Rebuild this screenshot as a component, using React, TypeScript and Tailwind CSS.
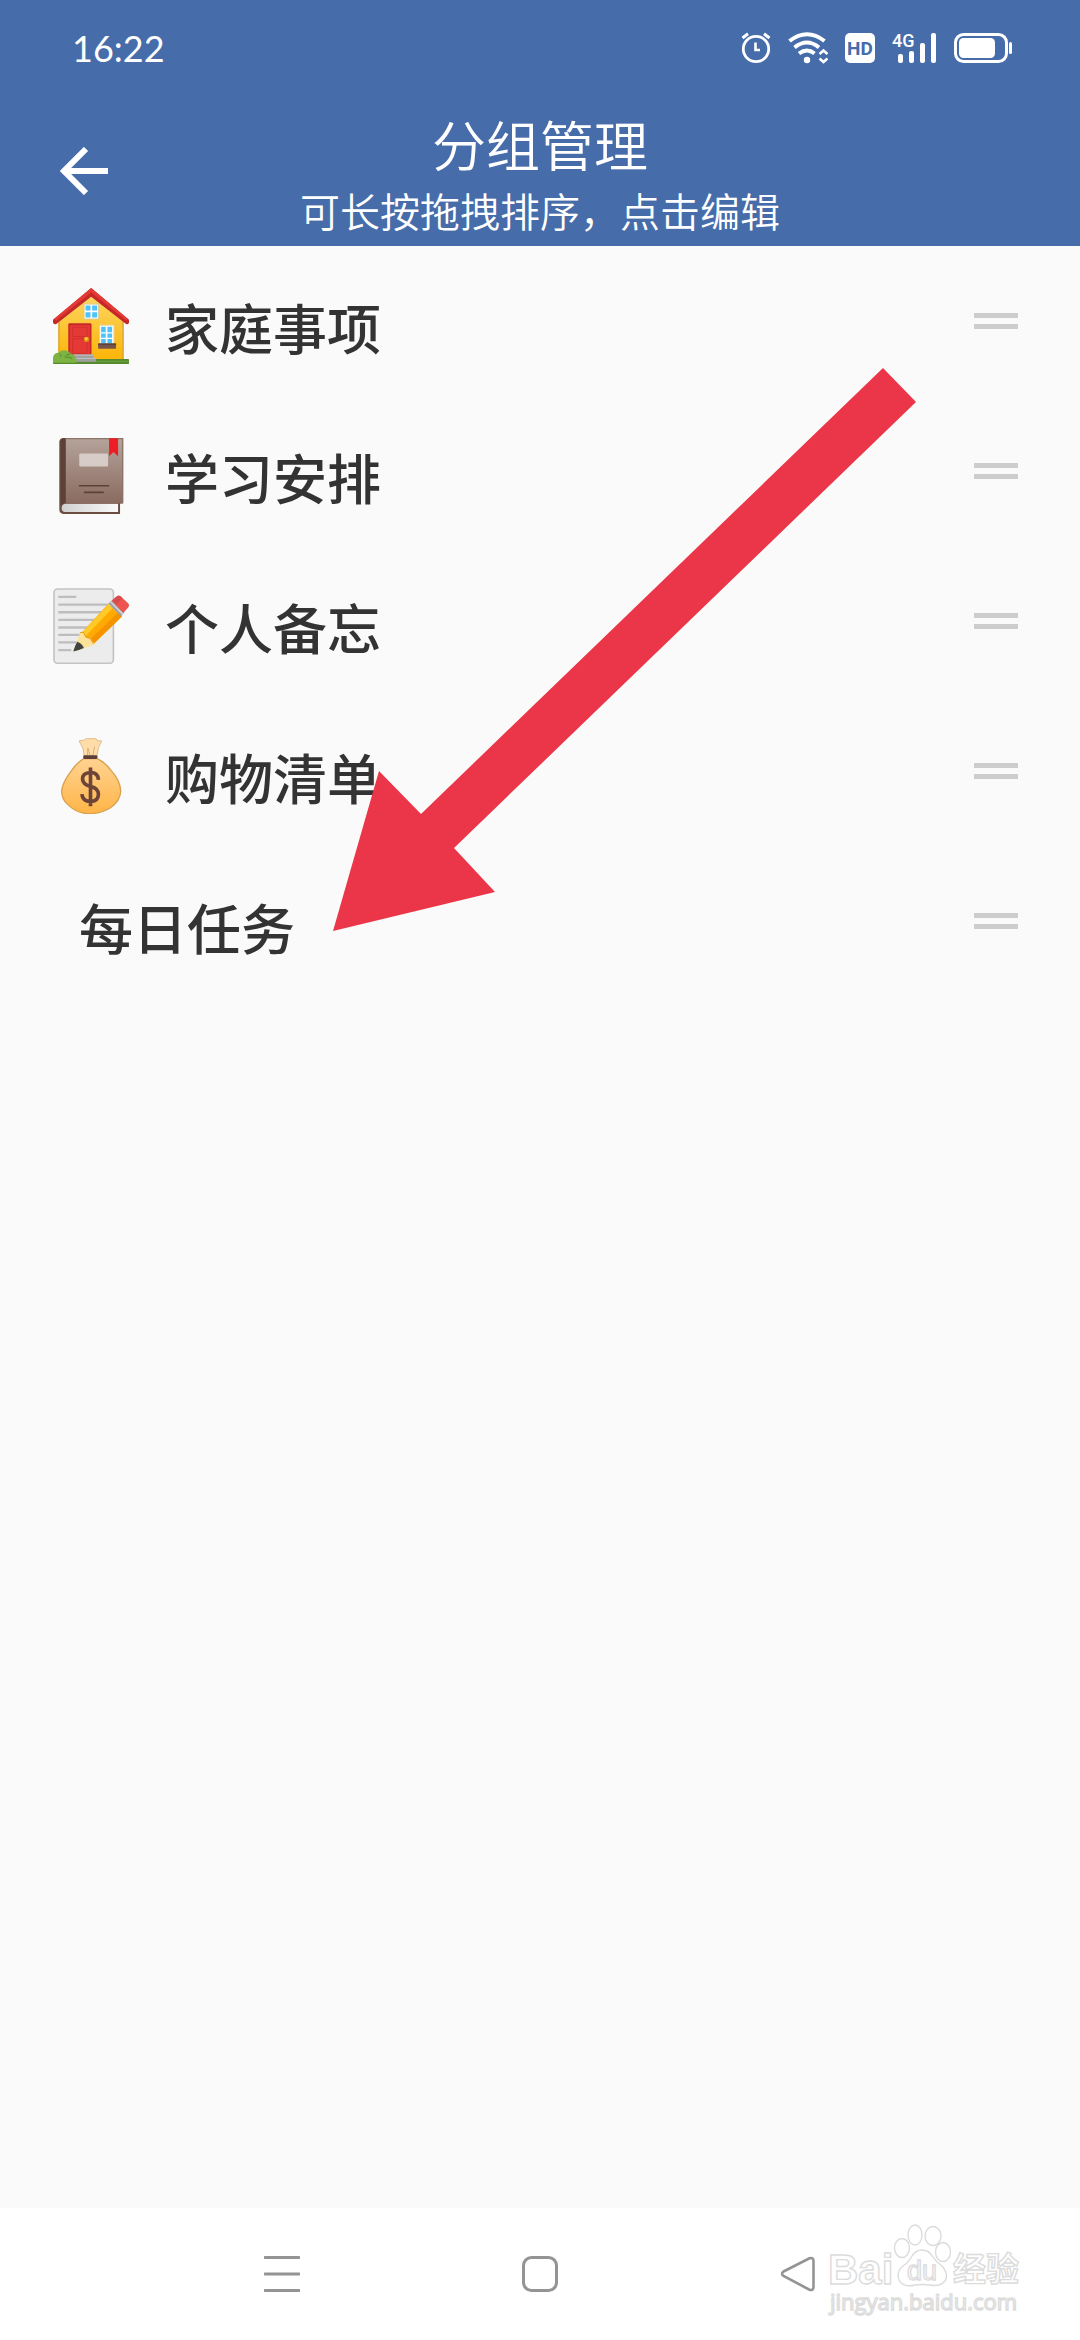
import type { ReactNode } from "react"

function HouseIcon() {
  return (
    <svg viewBox="38 52 229 229" className="size-[76px]" aria-hidden="true">
      <defs>
        <linearGradient id="house-wall" x1="0" y1="0" x2="0" y2="1">
          <stop offset="0" stopColor="#fdd663" />
          <stop offset="1" stopColor="#fcb507" />
        </linearGradient>
      </defs>
      <path d="M153 72L54 150V268H251V150Z" fill="url(#house-wall)" />
      <path d="M56 150V266M249 150V266" stroke="#dba53a" strokeWidth="4" />
      <path d="M153 52L38 148V157Q40 162 47 161L153 78L259 161Q266 162 267 157V148Z" fill="#c62828" />
      <path d="M153 52L42 145L47 151L153 65L259 151L263 145Z" fill="#e53935" />
      <rect x="130" y="99" width="47" height="48" rx="3" fill="#d9c98f" />
      <rect x="133" y="102" width="41" height="42" fill="#fff" />
      <path d="M136 105h15v15h-15zM156 105h15v15h-15zM136 125h15v16h-15zM156 125h15v16h-15z" fill="#4fc3f7" />
      <rect x="177" y="163" width="46" height="58" rx="3" fill="#e5d7a8" />
      <rect x="180" y="166" width="40" height="56" fill="#fff" />
      <path d="M183 169h14v16h-14zM202 169h14v16h-14zM183 189h14v13h-14zM202 189h14v13h-14zM183 206h14v13h-14zM202 206h14v13h-14z" fill="#4fc3f7" />
      <rect x="174" y="219" width="54" height="16" rx="2" fill="#795548" />
      <rect x="174" y="219" width="54" height="5" fill="#5d4037" />
      <rect x="84" y="158" width="70" height="96" rx="4" fill="#c62828" />
      <rect x="89" y="164" width="60" height="90" fill="#e53935" />
      <path d="M97 170h44v28h-44zM97 205h44v44h-44z" fill="none" stroke="#d32f2f" strokeWidth="3" />
      <circle cx="139" cy="207" r="8" fill="#d98b13" />
      <circle cx="138" cy="205" r="5" fill="#ffca28" />
      <rect x="38" y="266" width="229" height="15" rx="2" fill="#558b2f" />
      <path d="M90 273H267" stroke="#689f38" strokeWidth="4" />
      <path d="M100 252h60v10h8v12H98z" fill="#9e9e9e" />
      <path d="M100 252h60v4h-60zM100 262h68v4h-68z" fill="#bdbdbd" />
      <path d="M38 277V262Q40 247 55 247Q64 237 79 241Q88 243 92 250Q108 253 109 274V277Z" fill="#7cb342" />
      <path d="M57 250Q62 254 62 260M90 250Q76 252 74 263M79 262Q85 257 96 265" fill="none" stroke="#558b2f" strokeWidth="3" />
    </svg>
  )
}

function BookIcon() {
  return (
    <svg viewBox="38 52 229 229" className="size-[76px]" aria-hidden="true">
      <defs>
        <linearGradient id="book-cover" x1="0" y1="0" x2="0" y2="1">
          <stop offset="0" stopColor="#b5a39b" />
          <stop offset="1" stopColor="#8a6b60" />
        </linearGradient>
        <linearGradient id="book-pages" x1="0" y1="0" x2="1" y2="0">
          <stop offset="0" stopColor="#d0d0d0" />
          <stop offset="1" stopColor="#fafafa" />
        </linearGradient>
      </defs>
      <path d="M66 52H249V249H240V281H68Q57 279 57 267V62Q58 54 66 52Z" fill="#6d4c41" />
      <path d="M74 250H234V275H72Q64 273 64 262Q65 252 74 250Z" fill="url(#book-pages)" />
      <rect x="76" y="52" width="173" height="197" fill="url(#book-cover)" />
      <path d="M76 54H248V248" fill="none" stroke="#8d7469" strokeWidth="4" />
      <path d="M61 60Q64 54 76 53V248Q64 248 61 256Z" fill="#5d4037" />
      <rect x="117" y="99" width="87" height="39" rx="4" fill="#d7ccc8" />
      <path d="M207 53H234V107L220 94L207 107Z" fill="#ee1c25" />
      <path d="M116 196H207M131 216H191" stroke="#5d4037" strokeWidth="5" />
    </svg>
  )
}

function MemoIcon() {
  return (
    <svg viewBox="38 52 229 229" className="size-[76px]" aria-hidden="true">
      <rect x="41" y="55" width="179" height="224" rx="11" fill="#ececec" stroke="#c4c4c4" strokeWidth="5" />
      <path
        d="M54 79H108M54 102H205M54 125H190M54 148H168M54 171H146M54 193H124M54 216H110M54 239H93"
        stroke="#bdbdbd"
        strokeWidth="7"
      />
      <path d="M101 242L119 193L204 100L246 138L158 223Z" fill="#ffa903" />
      <path d="M120 193L205 101L218 113L134 199Z" fill="#ffca28" />
      <path d="M245 139L233 127L146 211L157 223Z" fill="#f59300" />
      <path d="M100 242L120 186L130 186L137 200L152 204L164 222L112 241Z" fill="#ffe29a" />
      <path d="M119 187L129 185L137 200L150 204L160 220" fill="none" stroke="#e59a12" strokeWidth="3" />
      <path d="M99 243Q104 226 111 214Q125 218 131 233Q117 240 99 243Z" fill="#424242" />
      <path d="M205 99L216 89L253 125L243 138Z" fill="#9e9e9e" />
      <path d="M210 95L213 92L250 129L247 133Z" fill="#d6d6d6" />
      <path d="M215 90L231 76Q237 73 242 77L265 99Q269 104 265 110L250 127Z" fill="#ef5350" />
      <path d="M217 90L231 77Q236 74 241 78L247 84L229 102Z" fill="#d94a4f" />
    </svg>
  )
}

function MoneyBagIcon() {
  return (
    <svg viewBox="38 52 229 229" className="size-[76px]" aria-hidden="true">
      <defs>
        <linearGradient id="bag-body" x1="0" y1="0" x2="0" y2="1">
          <stop offset="0" stopColor="#ffd391" />
          <stop offset="1" stopColor="#ffb548" />
        </linearGradient>
      </defs>
      <path
        d="M118 60Q130 61 139 54H168L171 60L185 61Q173 78 170 106H132Q131 80 118 64Z"
        fill="#ffdda8"
        stroke="#dfbd87"
        strokeWidth="3"
      />
      <path d="M142 105L143 82L150 105M158 105L163 78" fill="none" stroke="#d9ae70" strokeWidth="3" />
      <path
        d="M131 114H171Q195 125 214 151Q242 182 242 213Q240 243 210 263Q180 281 143 280Q108 278 82 252Q64 236 64 212Q66 187 91 154Q111 124 131 114Z"
        fill="url(#bag-body)"
        stroke="#d9a14d"
        strokeWidth="4"
      />
      <rect x="129" y="104" width="43" height="11" rx="4" fill="#5d4037" />
      <path
        d="M151 141V258M175 178Q174 156 151 156Q127 157 127 176Q128 192 151 198Q175 203 175 222Q174 243 151 243Q127 243 125 221"
        fill="none"
        stroke="#6d4437"
        strokeWidth="11"
      />
    </svg>
  )
}

const groups: { name: string; icon?: ReactNode }[] = [
  { name: "家庭事项", icon: <HouseIcon /> },
  { name: "学习安排", icon: <BookIcon /> },
  { name: "个人备忘", icon: <MemoIcon /> },
  { name: "购物清单", icon: <MoneyBagIcon /> },
  { name: "每日任务" },
]

function StatusBar() {
  return (
    <div className="flex h-24 items-center justify-between pr-[68px] pl-[72px]">
      <span className="font-['Lato',sans-serif] text-[36px] leading-12">16:22</span>
      <div className="flex items-center gap-[17px]">
        {/* alarm */}
        <svg viewBox="0 0 30 32" className="h-8 w-[30px]" fill="none" stroke="currentColor">
          <circle cx="15" cy="17" r="12.7" strokeWidth="2.8" />
          <path d="M14.5 10.5V18H19" strokeWidth="2.6" />
          <path d="M1.5 6L7 1.8M28.5 6L23 1.8" strokeWidth="3" />
        </svg>
        {/* wifi */}
        <svg viewBox="0 0 40 32" className="h-8 w-10" fill="none" stroke="currentColor">
          <path d="M1.5 9Q19 -4.5 36.5 9M6.5 15.5Q19 5.5 31 15.5M11 21.5Q19 15.5 26.5 21.5" strokeWidth="4" />
          <circle cx="19" cy="28" r="3.2" fill="currentColor" stroke="none" />
          <path d="M31.5 22L35.5 18.5L39.5 22M31.5 26.5L35.5 30L39.5 26.5" strokeWidth="2.6" />
        </svg>
        <svg viewBox="0 0 30 30" className="size-[30px]">
          <rect width="30" height="30" rx="5" fill="currentColor" />
          <text x="15" y="22" textAnchor="middle" className="fill-[#466caa] font-['Roboto',sans-serif] text-[19px] font-bold">
            HD
          </text>
        </svg>
        {/* mobile signal */}
        <svg viewBox="0 0 45 40" className="h-10 w-[45px]" fill="currentColor">
          <text x="0" y="19" className="font-['Roboto',sans-serif] text-[18px] font-medium">
            4G
          </text>
          <rect x="6" y="26" width="5" height="9" rx="2" />
          <rect x="17" y="23" width="5" height="12" rx="2" />
          <rect x="28" y="15" width="5" height="20" rx="2" />
          <rect x="39" y="5" width="5" height="30" rx="2" />
        </svg>
        {/* battery */}
        <svg viewBox="0 0 58 30" className="h-[30px] w-[58px]">
          <rect x="1.5" y="1.5" width="51" height="27" rx="8" fill="none" stroke="currentColor" strokeWidth="3" />
          <rect x="5" y="5" width="36" height="20" rx="4.5" fill="currentColor" />
          <rect x="55" y="9" width="3" height="12" rx="1.5" fill="currentColor" />
        </svg>
      </div>
    </div>
  )
}

function Header() {
  return (
    <header className="bg-[#466caa] text-white">
      <StatusBar />
      <div className="relative flex h-[150px] flex-col items-center pt-3">
        <button type="button" aria-label="返回" className="absolute inset-y-0 left-[60px]">
          <svg viewBox="0 0 48 48" className="size-12" fill="none" stroke="currentColor" strokeWidth="6">
            <path d="M48 24H6M26 2L4 24L26 46" />
          </svg>
        </button>
        <h1 className="text-[54px] leading-[72px] font-[350]">分组管理</h1>
        <p className="text-[40px] leading-[60px] font-[350]">可长按拖拽排序，点击编辑</p>
      </div>
    </header>
  )
}

function GroupList() {
  return (
    <ul>
      {groups.map((group) => (
        <li key={group.name} className="flex h-[150px] items-center justify-between pr-[62px] pl-[53px]">
          <button type="button" className="flex items-center gap-9 pt-[9px]">
            {group.icon}
            <span
              className={
                group.icon
                  ? "pt-[3px] text-[54px] leading-[76px] font-medium"
                  : "pt-[3px] pl-[26px] text-[54px] leading-[76px] font-medium"
              }
            >
              {group.name}
            </span>
          </button>
          <button type="button" aria-label={`拖动${group.name}`} className="flex w-11 cursor-grab flex-col gap-[6px]">
            <span className="h-[5px] bg-[#cdcdcd]" />
            <span className="h-[5px] bg-[#cdcdcd]" />
          </button>
        </li>
      ))}
    </ul>
  )
}

function Watermark() {
  return (
    <svg
      viewBox="0 0 210 104"
      className="pointer-events-none absolute top-3 right-[50px] h-[104px] w-[210px]"
      fill="#fff"
      stroke="#dcdcdc"
      strokeWidth="1.4"
    >
      <text x="8" y="64" className="font-['Liberation_Sans',sans-serif] text-[42px] font-bold">
        Bai
      </text>
      <ellipse cx="82" cy="28" rx="7.5" ry="9.5" />
      <ellipse cx="95" cy="15" rx="7" ry="10" />
      <ellipse cx="113" cy="16" rx="8" ry="9.5" />
      <ellipse cx="123" cy="32" rx="7.5" ry="9.5" />
      <path d="M102 30Q109 30 113 37Q116 42 122 46Q129 54 125 61Q120 67 110 65Q102 64 95 65Q83 68 79 60Q76 52 83 46Q89 42 92 36Q96 30 102 30Z" />
      <text x="87" y="60" className="font-['Liberation_Sans',sans-serif] text-[27px]">
        du
      </text>
      <text x="133" y="61" className="font-['Noto_Sans_CJK_SC',sans-serif] text-[33px] font-bold">
        经验
      </text>
      <text x="10" y="90" className="font-['Open_Sans',sans-serif] text-[22px]">
        jingyan.baidu.com
      </text>
    </svg>
  )
}

function NavBar() {
  return (
    <nav className="relative grid h-[132px] grid-cols-3 place-items-center bg-white px-[153px] text-[#949494]">
      <button type="button" aria-label="最近任务">
        <svg viewBox="0 0 36 36" className="size-9" fill="none" stroke="currentColor" strokeWidth="3" strokeLinecap="round">
          <path d="M1 1.5H35M1 18H35M1 34.5H35" />
        </svg>
      </button>
      <button type="button" aria-label="主屏幕">
        <svg viewBox="0 0 36 36" className="size-9" fill="none" stroke="currentColor" strokeWidth="3">
          <rect x="1.5" y="1.5" width="33" height="33" rx="8" />
        </svg>
      </button>
      <button type="button" aria-label="后退">
        <svg viewBox="0 0 36 36" className="size-9" fill="none" stroke="currentColor" strokeWidth="2.6">
          <path d="M3.5 15.5L29.5 2.3Q33.5 1 33.5 5V31Q33.5 35 29.5 33.7L3.5 20Q0.5 17.7 3.5 15.5Z" />
        </svg>
      </button>
      <Watermark />
    </nav>
  )
}

export default function App() {
  return (
    <div className="flex min-h-screen flex-col bg-[#fafafa] font-['Noto_Sans_CJK_SC',sans-serif] text-[#333]">
      <Header />
      <main className="relative flex-1">
        <GroupList />
        <svg
          viewBox="333 368 583 563"
          className="pointer-events-none absolute top-[122px] left-[333px] h-[563px] w-[583px]"
          aria-hidden="true"
        >
          <path d="M333 931L379 771L421 814L883 368L916 402L454 848L495 892Z" fill="#ea3648" />
        </svg>
      </main>
      <NavBar />
    </div>
  )
}
